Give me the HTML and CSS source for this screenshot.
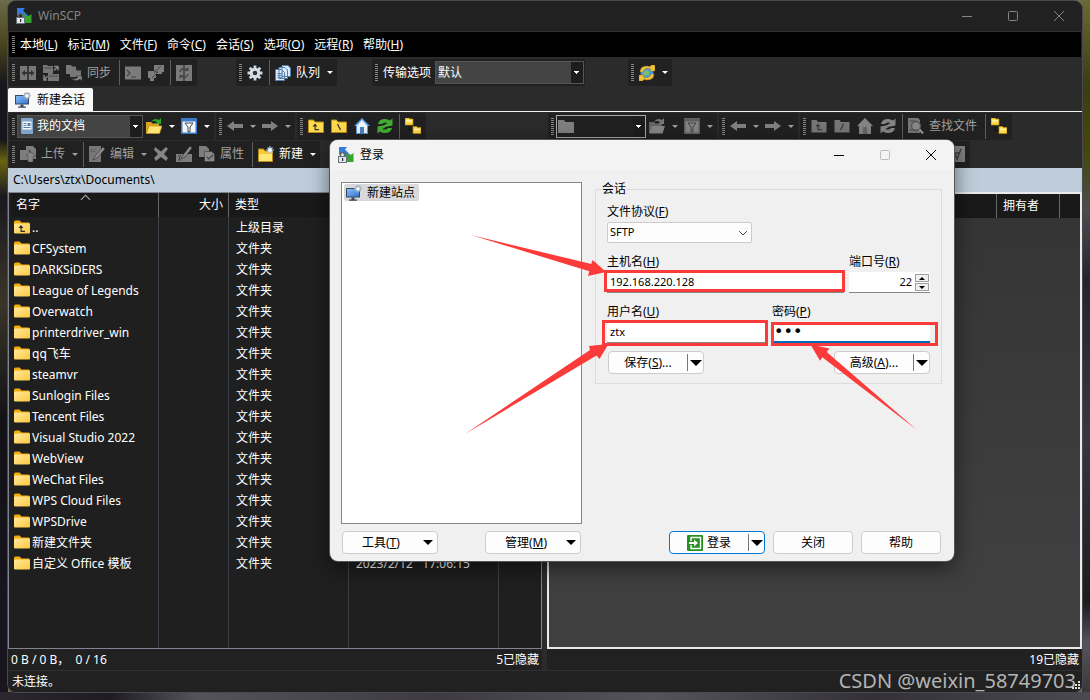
FILE: index.html
```html
<!DOCTYPE html>
<html lang="zh-CN">
<head>
<meta charset="utf-8">
<title>WinSCP</title>
<link rel="stylesheet" href="styles.css">
</head>
<body>
<svg class="defs" aria-hidden="true">
  <defs>
    <linearGradient id="gf" x1="0" y1="0" x2="1" y2="1"><stop offset="0" stop-color="#ffe9a0"/><stop offset="1" stop-color="#ffc83c"/></linearGradient>
    <linearGradient id="gb" x1="0" y1="0" x2="1" y2="1"><stop offset="0" stop-color="#8cc0f8"/><stop offset="1" stop-color="#2f73cf"/></linearGradient>
  </defs>
  <symbol id="i-app" viewBox="0 0 16 16"><path d="M1 0h8L7 2.500l5 5-3 2.500-5-5L1 8z" fill="#2f7de0"/><path d="M8 6l2 2 3.500-.5L15.500 6v9H7l2-3-2-3z" fill="#35a52c"/><path d="M2.500 10V7.500a2 2 0 0 1 4 0V10" fill="none" stroke="#5c6670" stroke-width="1.600"/><rect x=".5" y="9.500" width="8" height="6" fill="#dfe5ea" stroke="#66717c"/><path d="M4 11h1.200v3H4z" fill="#333"/></symbol>
  <symbol id="i-site" viewBox="0 0 16 16"><rect x=".5" y="3.500" width="13" height="8.500" fill="url(#gb)" stroke="#34485e"/><path d="M3 14.500h8v1.200H3zM5.500 12.500h3v2h-3z" fill="#34485e"/><path d="M12 0v7.400M8.300 3.700h7.400M9.400 1.100l5.200 5.200M14.600 1.100L9.400 6.300" stroke="#9fb1c3" stroke-width="1.400"/><circle cx="12" cy="3.700" r="2.300" fill="#fff" stroke="#9fb1c3" stroke-width="1.200"/></symbol>
  <symbol id="i-folder" viewBox="0 0 16 14"><path d="M0 2a1.500 1.500 0 0 1 1.500-1.500h4L7.500 2.500H14.500A1.500 1.500 0 0 1 16 4v5H0z" fill="#f4ae0c"/><rect y="3.500" width="16" height="10" rx="1.300" fill="url(#gf)"/></symbol>
  <symbol id="i-folderup" viewBox="0 0 16 14"><use href="#i-folder"/><path d="M7 5L4.500 8h2v4H11v-1.200H7.700V8h1.800z" fill="#2b2b2b"/></symbol>
  <symbol id="i-sync1" viewBox="0 0 16 16"><path d="M0 1h7.300v14H0zM8.700 1H16v14H8.700z" fill="#777"/><path d="M1.500 8L5 5v2h6V5l3.500 3L11 11V9H5v2z" fill="#333"/></symbol>
  <symbol id="i-sync2" viewBox="0 0 16 16"><path d="M0 0h4l1 1h5v7H0zM5 8h4l1 1h6v7H5z" fill="#777"/><path d="M11 1.500h4v4M15 1.500l-4 4M1 10v5h3M1 15l3.500-4" fill="none" stroke="#858585" stroke-width="1.500"/><path d="M1 3h8M6 11h9" stroke="#4a4a4a"/></symbol>
  <symbol id="i-sync3" viewBox="0 0 16 16"><path d="M0 0h5l1 1.500h4V9H0zM4 4h6l1 1.500h4V12H4z" fill="#777"/><path d="M4 12q4 4 8 0l-2-1h6v5l-2-2q-5 4-10-2" fill="#888" stroke="#333" stroke-width=".5"/></symbol>
  <symbol id="i-term" viewBox="0 0 16 16"><path d="M0 1.500h16v13H0z" fill="#7b7b7b"/><path d="M2 5l3 3-3 3M6 12h5" fill="none" stroke="#444" stroke-width="1.200"/></symbol>
  <symbol id="i-putty" viewBox="0 0 16 16"><path d="M6 0h10v7h-2v2H8V7H6zM0 6h8v7H6v3H2v-3H0z" fill="#7d7d7d"/><path d="M13 1L6 7h4l-6 6" fill="none" stroke="#444"/></symbol>
  <symbol id="i-resync" viewBox="0 0 16 16"><path d="M0 0h7.500v16H0zM8.500 0H16v16H8.500z" fill="#7a7a7a"/><path d="M4 7a4 4 0 0 1 7-2M12 9a4 4 0 0 1-7 2" fill="none" stroke="#444" stroke-width="1.400"/><path d="M12.500 2v4h-4zM3.500 14v-4h4z" fill="#444"/></symbol>
  <symbol id="i-gear" viewBox="0 0 16 16"><path d="M8 .5v15M.5 8h15M2.700 2.700l10.600 10.600M13.300 2.700L2.700 13.300" stroke="#cbd7e3" stroke-width="2.800"/><circle cx="8" cy="8" r="5.300" fill="#d6e0ea"/><circle cx="8" cy="8" r="2.300" fill="#333"/></symbol>
  <symbol id="i-queue" viewBox="0 0 16 16"><path d="M7 .5h6l2.500 2.500v8.500H7zM4 2.500h6L12.500 5v8.500H4zM.5 4.500h6L9.500 7.500v8H.5z" fill="#dce9f7" stroke="#527da9"/><path d="M2.500 8.500h5M2.500 10.500h5M2.500 12.500h5" stroke="#527da9"/></symbol>
  <symbol id="i-globe" viewBox="0 0 16 16"><circle cx="8" cy="8" r="6.500" fill="#4a97df"/><path d="M6 6q3-2 4 1t-2 3-2 2-2-4z" fill="#7cc36c"/><path d="M1 7Q1 1 8 1l3 .5L12.500 0H16v6h-5.500l1.500-2Q6 1.500 4 7zM15 9q0 6-7 6l-3-.5L3.500 16H0v-6h5.500L4 12Q10 14.500 12 9z" fill="#f0c23a" stroke="#9b7014" stroke-width=".4"/></symbol>
  <symbol id="i-docs" viewBox="0 0 12 16"><rect width="12" height="16" rx="1" fill="#7fa5c9"/><path d="M1.500 3.500h9v8h-9z" fill="#f4f8fb"/><path d="M2.500 5.500h3M2.500 7.500h3M2.500 9.500h7" fill="none" stroke="#557da5"/><path d="M6.500 5h3v3h-3z" fill="#557da5"/></symbol>
  <symbol id="i-open" viewBox="0 0 16 16"><path d="M0 4h5l1.500 1.500H13V15H0z" fill="#d9a520"/><path d="M3 8h13l-2.500 7.500H.5z" fill="#ffe474" stroke="#c9941c" stroke-width=".7"/><path d="M5 4q3-5 8-2l2-2v6H9l2-2q-3-2-6 0z" fill="#2da42d"/></symbol>
  <symbol id="i-open-g" viewBox="0 0 16 16"><path d="M0 4h5l1.500 1.500H13V15H0z" fill="#666"/><path d="M3 8h13l-2.500 7.500H.5z" fill="#858585"/><path d="M5 4q3-5 8-2l2-2v6H9l2-2q-3-2-6 0z" fill="#777"/></symbol>
  <symbol id="i-filter" viewBox="0 0 16 16"><path d="M0 0h16v16H0z" fill="#3979c8"/><path d="M1.500 3.500h13v11h-13z" fill="#f2f6fb"/><path d="M4 5h8L9 9v5H7V9z" fill="#fff" stroke="#444"/></symbol>
  <symbol id="i-filter-g" viewBox="0 0 16 16"><path d="M0 0h16v16H0z" fill="#606060"/><path d="M1.500 3.500h13v11h-13z" fill="#858585"/><path d="M4 5h8L9 9v5H7V9z" fill="#858585" stroke="#444"/></symbol>
  <symbol id="i-left" viewBox="0 0 16 16"><path d="M0 8l7-5v3h9v4H7v3z" fill="#808080"/></symbol>
  <symbol id="i-right" viewBox="0 0 16 16"><path d="M16 8L9 3v3H0v4h9v3z" fill="#808080"/></symbol>
  <symbol id="i-up" viewBox="0 0 16 16"><path d="M.5 2h5L7 4h8.500v10.500H.5z" fill="#ffdb4d" stroke="#b88a16"/><path d="M7 5.500L4.500 8.500h2v3.700H11V11H7.700V8.500h1.800z" fill="#333"/></symbol>
  <symbol id="i-root" viewBox="0 0 16 16"><path d="M.5 2h5L7 4h8.500v10.500H.5z" fill="#ffdb4d" stroke="#b88a16"/><path d="M6.500 6l3 6" stroke="#333" stroke-width="1.300"/></symbol>
  <symbol id="i-home" viewBox="0 0 16 16"><path d="M8 0L0 8h2v8h12V8h2z" fill="#5c9be1"/><path d="M8 2L3 7.500V15h10V7.500z" fill="#eff6ff"/><path d="M6 9h4v7H6z" fill="#4b85c6"/></symbol>
  <symbol id="i-refresh" viewBox="0 0 16 16"><path d="M1 6Q2 1 8 1q3 0 5 1.500L15.500.5V7.500L8 9 6.500 7.500 10.500 5Q7 3.500 5 6zM15 10q-1 5-7 5-3 0-5-1.500L.5 15.500V8.500L8 7l1.500 1.500L5.500 11q3.500 1.500 5.500-1z" fill="#45ad35"/></symbol>
  <symbol id="i-up-g" viewBox="0 0 16 16"><path d="M.5 2h5L7 4h8.500v10.500H.5z" fill="#777"/><path d="M7 5.500L4.500 8.500h2v3.700H11V11H7.700V8.500h1.800z" fill="#383838"/></symbol>
  <symbol id="i-root-g" viewBox="0 0 16 16"><path d="M.5 2h5L7 4h8.500v10.500H.5z" fill="#777"/><path d="M9.500 6l-3 6" stroke="#383838" stroke-width="1.300"/></symbol>
  <symbol id="i-home-g" viewBox="0 0 16 16"><path d="M8 0L0 8h2v8h12V8h2z" fill="#858585"/><path d="M6 9h4v7H6z" fill="#666"/></symbol>
  <symbol id="i-refresh-g" viewBox="0 0 16 16"><path d="M1 6Q2 1 8 1q3 0 5 1.500L15.500.5V7.500L8 9 6.500 7.500 10.500 5Q7 3.500 5 6zM15 10q-1 5-7 5-3 0-5-1.500L.5 15.500V8.500L8 7l1.500 1.500L5.500 11q3.500 1.500 5.500-1z" fill="#858585"/></symbol>
  <symbol id="i-tree" viewBox="0 0 16 16"><path d="M0 0h4l1 1h3v6H0zM8 8.500h3.500l1 1H16v6H8z" fill="#ffd94a" stroke="#b98c12" stroke-width=".7"/><path d="M1 3h6M9 11.500h6" stroke="#fff3ae" stroke-width="1.500"/><path d="M4 8.500v4h3" fill="none" stroke="#000" stroke-dasharray="1 1"/></symbol>
  <symbol id="i-upload" viewBox="0 0 16 16"><path d="M6 0h7l3 3v10h-4V7L9 4H6zM0 4h8l3 3v4L8 9v5H0z" fill="#7d7d7d"/><path d="M6 9l5-3 5 4h-3v6H8v-6z" fill="#888" stroke="#333" stroke-width=".4"/></symbol>
  <symbol id="i-edit" viewBox="0 0 16 16"><path d="M0 0h12v16H0z" fill="#777"/><path d="M14 1l2 2-8 9-4 2 2-4z" fill="#8d8d8d" stroke="#333" stroke-width=".6"/><path d="M1.500 3.500h5M1.500 5.500h5" stroke="#606060"/></symbol>
  <symbol id="i-x" viewBox="0 0 16 16"><path d="M2 1l6 4.500L13 1l2 2-4 5 4 4-2 3-5-4-5 4-2-3 4-4-4-4z" fill="#858585"/></symbol>
  <symbol id="i-rename" viewBox="0 0 16 16"><path d="M0 8h16v8H0z" fill="#7d7d7d"/><path d="M14 0l2 2-7 9-4 2 2-4z" fill="#8d8d8d" stroke="#333" stroke-width=".7"/><path d="M2 10h3M3.500 10v4M2 14h3" stroke="#444"/></symbol>
  <symbol id="i-props" viewBox="0 0 16 16"><path d="M0 0h7l3 3v8H0z" fill="#7d7d7d"/><path d="M5.500 5.500h7L15.500 8v7.500h-10z" fill="#888" stroke="#333" stroke-width=".5"/><path d="M8 11l2 2 4-4" fill="none" stroke="#444" stroke-width="1.200"/></symbol>
  <symbol id="i-newf" viewBox="0 0 16 16"><path d="M.5 3h5L7 5h7.500v10.500H.5z" fill="#f8c838" stroke="#b88a16"/><path d="M1 8h13v7H1z" fill="#ffe776"/><path d="M12 0v8M8 4h8M9.500 1.500l5 5M14.500 1.500l-5 5" stroke="#a9cdf0" stroke-width="1.200"/><circle cx="12" cy="4" r="1.800" fill="#fff"/></symbol>
  <symbol id="i-find" viewBox="0 0 16 16"><path d="M0 0h10l2 2v13H0z" fill="#777"/><circle cx="8" cy="8" r="4.500" fill="#888" stroke="#555" stroke-width="1.300"/><path d="M11.500 11.500L15 15.500" stroke="#999" stroke-width="2"/><path d="M2 3h6M2 12h5" stroke="#4d4d4d"/></symbol>
  <symbol id="i-all" viewBox="0 0 16 16"><path d="M0 0h16v16H0z" fill="#808080"/><path d="M4 3l4 10 4-10M5.500 7h5" fill="none" stroke="#3c3c3c" stroke-width="1.400"/></symbol>
  <symbol id="i-login" viewBox="0 0 16 16"><rect width="16" height="16" rx="1" fill="#259221"/><path d="M4 6V2.500h9.500v11H4V10" fill="none" stroke="#fff" stroke-width="1.400"/><path d="M2 7h5V4.500L11 8l-4 3.500V9H2z" fill="#fff"/></symbol>
  <symbol id="i-gfolder" viewBox="0 0 16 14"><path d="M0 1h6l1.500 2H16v11H0z" fill="#808080"/></symbol>
  <symbol id="i-min" viewBox="0 0 12 12"><path d="M1 6.500h10" stroke="currentColor" fill="none"/></symbol>
  <symbol id="i-max" viewBox="0 0 12 12"><rect x="1.500" y="1.500" width="9" height="9" rx="1" stroke="currentColor" fill="none"/></symbol>
  <symbol id="i-close" viewBox="0 0 12 12"><path d="M1 1l10 10M11 1L1 11" stroke="currentColor" fill="none"/></symbol>
</svg>

<div class="window">
  <header class="titlebar">
    <svg class="icon"><use href="#i-app"/></svg>
    <span class="app-name">WinSCP</span>
    <button class="win-btn" aria-label="最小化"><svg><use href="#i-min"/></svg></button>
    <button class="win-btn" aria-label="最大化"><svg><use href="#i-max"/></svg></button>
    <button class="win-btn" aria-label="关闭窗口"><svg><use href="#i-close"/></svg></button>
  </header>

  <nav class="menubar">
    <i class="grip"></i>
    <button>本地(<u>L</u>)</button><button>标记(<u>M</u>)</button><button>文件(<u>F</u>)</button><button>命令(<u>C</u>)</button><button>会话(<u>S</u>)</button><button>选项(<u>O</u>)</button><button>远程(<u>R</u>)</button><button>帮助(<u>H</u>)</button>
  </nav>

  <div class="main-tools">
    <div class="band">
      <i class="grip"></i>
      <button class="tool"><svg class="icon"><use href="#i-sync1"/></svg></button>
      <button class="tool"><svg class="icon"><use href="#i-sync2"/></svg></button>
      <button class="tool off"><svg class="icon"><use href="#i-sync3"/></svg><span class="wide">同步</span></button>
      <i class="sep"></i>
      <button class="tool"><svg class="icon"><use href="#i-term"/></svg></button>
      <button class="tool"><svg class="icon"><use href="#i-putty"/></svg></button>
      <i class="sep"></i>
      <button class="tool"><svg class="icon"><use href="#i-resync"/></svg></button>
    </div>
    <div class="band queue-band">
      <i class="grip"></i>
      <button class="tool"><svg class="icon"><use href="#i-gear"/></svg></button>
      <i class="sep"></i>
      <button class="tool"><svg class="icon"><use href="#i-queue"/></svg><span>队列</span></button>
      <button class="drop" aria-label="队列选项"></button>
    </div>
    <div class="band">
      <i class="grip"></i>
      <label class="band-label" for="transfer">传输选项</label>
      <span class="combo transfer"><select id="transfer"><option>默认</option></select></span>
    </div>
    <div class="band update-band">
      <i class="grip"></i>
      <button class="tool"><svg class="icon"><use href="#i-globe"/></svg></button>
      <button class="drop" aria-label="更新选项"></button>
    </div>
  </div>

  <div class="tabs"><button class="tab"><svg class="icon"><use href="#i-site"/></svg>新建会话</button></div>

  <main class="panes">
    <section class="pane">
      <div class="tool-row">
        <div class="band">
          <i class="grip"></i>
          <span class="combo drive"><svg><use href="#i-docs"/></svg><select aria-label="本地位置"><option>我的文档</option></select></span>
          <button class="tool"><svg class="icon"><use href="#i-open"/></svg></button><button class="drop"></button>
          <button class="tool"><svg class="icon"><use href="#i-filter"/></svg></button><button class="drop"></button>
        </div>
        <div class="band">
          <i class="grip"></i>
          <button class="tool"><svg class="icon"><use href="#i-left"/></svg></button><button class="drop off"></button>
          <button class="tool"><svg class="icon"><use href="#i-right"/></svg></button><button class="drop off"></button>
        </div>
        <div class="band">
          <i class="grip"></i>
          <button class="tool"><svg class="icon"><use href="#i-up"/></svg></button>
          <button class="tool"><svg class="icon"><use href="#i-root"/></svg></button>
          <button class="tool"><svg class="icon"><use href="#i-home"/></svg></button>
          <button class="tool"><svg class="icon"><use href="#i-refresh"/></svg></button>
          <i class="sep"></i>
          <button class="tool"><svg class="icon"><use href="#i-tree"/></svg></button>
        </div>
      </div>
      <div class="tool-row">
        <div class="band">
          <i class="grip"></i>
          <button class="tool off"><svg class="icon"><use href="#i-upload"/></svg><span>上传</span></button><button class="drop off"></button>
          <i class="sep"></i>
          <button class="tool off"><svg class="icon"><use href="#i-edit"/></svg><span>编辑</span></button><button class="drop off"></button>
          <button class="tool"><svg class="icon"><use href="#i-x"/></svg></button>
          <button class="tool"><svg class="icon"><use href="#i-rename"/></svg></button>
          <button class="tool off"><svg class="icon"><use href="#i-props"/></svg><span class="wide">属性</span></button>
          <i class="sep"></i>
          <button class="tool"><svg class="icon"><use href="#i-newf"/></svg><span>新建</span></button><button class="drop"></button>
        </div>
      </div>
      <div class="path">C:\Users\ztx\Documents\</div>
      <div class="list">
        <table>
          <colgroup><col class="c-name"><col class="c-size"><col class="c-type"><col class="c-date"><col></colgroup>
          <thead><tr><th class="sorted">名字</th><th class="num">大小</th><th>类型</th><th></th><th></th></tr></thead>
          <tbody>
            <tr><td><svg><use href="#i-folderup"/></svg>..</td><td></td><td>上级目录</td><td></td><td></td></tr>
            <tr><td><svg><use href="#i-folder"/></svg>CFSystem</td><td></td><td>文件夹</td><td></td><td></td></tr>
            <tr><td><svg><use href="#i-folder"/></svg>DARKSiDERS</td><td></td><td>文件夹</td><td></td><td></td></tr>
            <tr><td><svg><use href="#i-folder"/></svg>League of Legends</td><td></td><td>文件夹</td><td></td><td></td></tr>
            <tr><td><svg><use href="#i-folder"/></svg>Overwatch</td><td></td><td>文件夹</td><td></td><td></td></tr>
            <tr><td><svg><use href="#i-folder"/></svg>printerdriver_win</td><td></td><td>文件夹</td><td></td><td></td></tr>
            <tr><td><svg><use href="#i-folder"/></svg>qq飞车</td><td></td><td>文件夹</td><td></td><td></td></tr>
            <tr><td><svg><use href="#i-folder"/></svg>steamvr</td><td></td><td>文件夹</td><td></td><td></td></tr>
            <tr><td><svg><use href="#i-folder"/></svg>Sunlogin Files</td><td></td><td>文件夹</td><td></td><td></td></tr>
            <tr><td><svg><use href="#i-folder"/></svg>Tencent Files</td><td></td><td>文件夹</td><td></td><td></td></tr>
            <tr><td><svg><use href="#i-folder"/></svg>Visual Studio 2022</td><td></td><td>文件夹</td><td></td><td></td></tr>
            <tr><td><svg><use href="#i-folder"/></svg>WebView</td><td></td><td>文件夹</td><td></td><td></td></tr>
            <tr><td><svg><use href="#i-folder"/></svg>WeChat Files</td><td></td><td>文件夹</td><td></td><td></td></tr>
            <tr><td><svg><use href="#i-folder"/></svg>WPS Cloud Files</td><td></td><td>文件夹</td><td></td><td></td></tr>
            <tr><td><svg><use href="#i-folder"/></svg>WPSDrive</td><td></td><td>文件夹</td><td></td><td></td></tr>
            <tr><td><svg><use href="#i-folder"/></svg>新建文件夹</td><td></td><td>文件夹</td><td></td><td></td></tr>
            <tr><td><svg><use href="#i-folder"/></svg>自定义 Office 模板</td><td></td><td>文件夹</td><td>2023/2/12&nbsp;&nbsp; 17:06:15</td><td></td></tr>
            <tr class="fill"><td></td><td></td><td></td><td></td><td></td></tr>
          </tbody>
        </table>
      </div>
      <div class="status"><span>0 B / 0 B，&nbsp; 0 / 16</span><span>5已隐藏</span></div>
    </section>

    <section class="pane">
      <div class="tool-row">
        <div class="band">
          <i class="grip"></i>
          <span class="combo remote"><svg><use href="#i-gfolder"/></svg><select aria-label="远程位置"><option></option></select></span>
          <button class="tool"><svg class="icon"><use href="#i-open-g"/></svg></button><button class="drop off"></button>
          <button class="tool"><svg class="icon"><use href="#i-filter-g"/></svg></button><button class="drop off"></button>
        </div>
        <div class="band">
          <i class="grip"></i>
          <button class="tool"><svg class="icon"><use href="#i-left"/></svg></button><button class="drop off"></button>
          <button class="tool"><svg class="icon"><use href="#i-right"/></svg></button><button class="drop off"></button>
        </div>
        <div class="band">
          <i class="grip"></i>
          <button class="tool"><svg class="icon"><use href="#i-up-g"/></svg></button>
          <button class="tool"><svg class="icon"><use href="#i-root-g"/></svg></button>
          <button class="tool"><svg class="icon"><use href="#i-home-g"/></svg></button>
          <button class="tool"><svg class="icon"><use href="#i-refresh-g"/></svg></button>
          <i class="sep"></i>
          <button class="tool off"><svg class="icon"><use href="#i-find"/></svg><span class="wide">查找文件</span></button>
          <i class="sep"></i>
          <button class="tool"><svg class="icon"><use href="#i-tree"/></svg></button>
        </div>
      </div>
      <div class="tool-row select-row">
        <div class="band">
          <i class="grip"></i>
          <button class="tool"><svg class="icon"><use href="#i-all"/></svg></button>
        </div>
      </div>
      <div class="path"></div>
      <div class="list remote-list">
        <table>
          <colgroup><col><col class="c-owner"><col class="c-end"></colgroup>
          <thead><tr><th></th><th>拥有者</th><th></th></tr></thead>
        </table>
      </div>
      <div class="status"><span></span><span>19已隐藏</span></div>
    </section>
  </main>
  <footer class="footer">未连接。</footer>
  <div class="watermark">CSDN @weixin_58749703</div>
  <svg class="size-grip" viewBox="0 0 9 9"><path d="M6 0h2v2H6zM3 3h2v2H3zM6 3h2v2H6zM0 6h2v2H0zM3 6h2v2H3zM6 6h2v2H6z" fill="#ddd"/></svg>
</div>

<form class="dialog" role="dialog" aria-labelledby="dlg-title">
  <div class="dlg-title">
    <svg class="icon"><use href="#i-app"/></svg>
    <span id="dlg-title">登录</span>
    <button type="button" class="win-btn" aria-label="最小化"><svg><use href="#i-min"/></svg></button>
    <button type="button" class="win-btn" disabled aria-label="最大化"><svg><use href="#i-max"/></svg></button>
    <button type="button" class="win-btn" aria-label="关闭对话框"><svg><use href="#i-close"/></svg></button>
  </div>
  <div class="dlg-body">
    <div class="sites"><button type="button" class="site"><svg class="icon"><use href="#i-site"/></svg>新建站点</button></div>
    <fieldset>
      <legend>会话</legend>
      <div class="field protocol">
        <label for="proto">文件协议(<u>F</u>)</label>
        <span class="select-box"><select id="proto"><option>SFTP</option></select><svg viewBox="0 0 10 6"><path d="M1 1l4 4 4-4" fill="none" stroke="#555"/></svg></span>
      </div>
      <div class="line host-line">
        <div class="field"><label for="host">主机名(<u>H</u>)</label><input id="host" type="text" value="192.168.220.128"></div>
        <div class="field"><label for="port">端口号(<u>R</u>)</label>
          <span class="spin"><input id="port" type="text" value="22"><span class="spin-btns"><button type="button" class="spin-up" aria-label="增加"></button><button type="button" class="spin-down" aria-label="减少"></button></span></span>
        </div>
      </div>
      <div class="line user-line">
        <div class="field"><label for="user">用户名(<u>U</u>)</label><input id="user" type="text" value="ztx"></div>
        <div class="field"><label for="pass">密码(<u>P</u>)</label><input id="pass" class="focused" type="password" value="ztx"></div>
      </div>
      <div class="actions">
        <span class="split"><button type="button">保存(<u>S</u>)...</button><button type="button" class="arrow" aria-label="保存选项"></button></span>
        <span class="split"><button type="button">高级(<u>A</u>)...</button><button type="button" class="arrow" aria-label="高级选项"></button></span>
      </div>
    </fieldset>
  </div>
  <div class="dlg-foot">
    <div class="foot-left">
      <button type="button" class="btn menu-btn"><span>工具(<u>T</u>)</span></button>
      <button type="button" class="btn menu-btn"><span>管理(<u>M</u>)</span></button>
    </div>
    <div class="foot-right">
      <span class="split primary"><button type="submit"><svg class="icon"><use href="#i-login"/></svg>登录</button><button type="button" class="arrow" aria-label="登录选项"></button></span>
      <button type="button" class="btn">关闭</button>
      <button type="button" class="btn">帮助</button>
    </div>
  </div>
  <svg class="marks" viewBox="330 140 624 421" aria-hidden="true">
    <g fill="none" stroke="#fb3b39" stroke-width="3">
      <path d="M605.500 271.500h238v19h-238zM603.500 321.500h163v23h-163zM772.500 323.500h164v21h-164z"/>
    </g>
    <g fill="#fb3b39">
      <path d="M471 235l120.300 29 1.400-4L606 272l-18 4 1.300-4.700z"/>
      <path d="M465 434l125-84-1-4 19.500-2-9 15-3-3.500z"/>
      <path d="M917 430l-94.700-72.700-2.300 3.400-9.500-16.200 19 4-2.800 3.500z"/>
    </g>
  </svg>
</form>
</body>
</html>
```
FILE: styles.css
```css
* { box-sizing: border-box; }

body {
  margin: 0;
  height: 100vh;
  padding: 1px 8px 8px;
  position: relative;
  overflow: hidden;
  font: 12px/16px "Noto Sans", "Noto Sans CJK SC", sans-serif;
  color: #fff;
  background:
    linear-gradient(90deg, #2a272e, #1e1b22 10%, #54525b 18%, #3d3a42 40%, #55535a 60%, #333039 80%, #4a4850) bottom / 100% 8px no-repeat,
    linear-gradient(#6b6a35, #3b3d12 12%, #45480c 22%, #4a4c50 30%, #24252a 40%, #37373d 62%, #1d1b20 86%, #55535c 92%, #333) right / 8px 100% no-repeat,
    linear-gradient(#6b6a4a, #4b461d 6%, #17161c 12%, #17161c 20%, #6b6410 23%, #191820 28%, #3a3528 43%, #121217 60%, #1a1520 100%) left / 8px 100% no-repeat,
    #6d6c4c;
}

button, input, select { font: inherit; color: inherit; margin: 0; padding: 0; border: 0; background: none; border-radius: 0; }
select { appearance: none; }
.defs { position: absolute; width: 0; height: 0; }
.icon { width: 16px; height: 16px; flex: none; }

.window {
  position: relative;
  height: 100%;
  display: flex;
  flex-direction: column;
  background: #2b2b2b;
  border-radius: 8px;
  overflow: hidden;
  box-shadow: 0 0 0 1px #4a4a4a;
}

.titlebar { height: 31px; flex: none; display: flex; align-items: center; background: #212121; padding-left: 8px; color: #858585; border-bottom: 1px solid #303030; }
.app-name { flex: 1; padding-left: 6px; }
.win-btn { width: 46px; height: 100%; display: flex; align-items: center; justify-content: center; }
.win-btn svg { width: 12px; height: 12px; }

.menubar { height: 25px; flex: none; display: flex; align-items: center; gap: 10px; background: #000; margin: 0 1px; }
.menubar .grip { margin-right: -7px; }
.menubar button { white-space: nowrap; }

.grip {
  width: 8px;
  height: 17px;
  flex: none;
  background: repeating-linear-gradient(#858585 0 1px, transparent 1px 2px) 3px 0 / 3px 100% no-repeat;
}
.main-tools { height: 31px; flex: none; display: flex; align-items: center; gap: 35px; padding: 1px; }
.queue-band { margin-left: 4px; }
.update-band { margin-left: 8px; }
.band { height: 27px; display: flex; align-items: center; background: #212121; border-radius: 2px; padding-right: 1px; flex: none; }
.tool { display: flex; align-items: center; padding: 0 4px 0 3px; height: 24px; }
.tool span { padding-left: 5px; white-space: nowrap; }
.tool .wide { padding-right: 2px; }
.off { color: #a0a0a0; }
.sep { width: 1px; height: 25px; background: #5e5e5e; margin: 0 2px; }
.drop { width: 12px; height: 24px; display: flex; align-items: center; justify-content: center; }
.drop::before { content: ""; border: 3px solid transparent; border-top-color: currentColor; border-bottom: 0; }
.band-label { padding: 0 4px 0 3px; }

.combo { position: relative; height: 23px; display: flex; align-items: center; background: #444; border: 1px solid #555; }
.combo select { width: 100%; height: 100%; padding-left: 2px; }
.combo::after {
  content: "";
  position: absolute;
  inset: 0 0 0 auto;
  width: 12px;
  pointer-events: none;
  background:
    linear-gradient(#fff, #fff) 3px 9px / 5px 1px no-repeat,
    linear-gradient(#fff, #fff) 4px 10px / 3px 1px no-repeat,
    linear-gradient(#fff, #fff) 5px 11px / 1px 1px no-repeat,
    #1d1d1d;
}
.transfer { width: 149px; }
.drive { width: 126px; }
.drive svg { width: 12px; height: 16px; flex: none; margin-left: 3px; }
.drive select { padding-left: 4px; }
.remote { width: 90px; background: #212121; border-color: #aaa; }
.remote svg { width: 16px; height: 14px; flex: none; margin-left: 1px; }

.tabs { height: 24px; flex: none; border-bottom: 1px solid #f3f3f3; display: flex; }
.tab { display: flex; align-items: center; gap: 6px; background: #f9f9f9; color: #000; padding: 0 8px 0 7px; border-radius: 2px 2px 0 0; }

.panes { flex: 1; min-height: 0; display: grid; grid-template-columns: 534fr 535fr; gap: 5px; }
.pane { display: flex; flex-direction: column; min-width: 0; }
.tool-row { height: 28px; flex: none; display: flex; align-items: center; gap: 2px; padding-left: 1px; }
.select-row { justify-content: flex-end; padding-right: 112px; }
.path { height: 24px; flex: none; background: #bfcddb; color: #000; padding: 4px 5px; }
.list { flex: 1; min-height: 0; border: 1px solid #808490; padding-left: 2px; background: #1f1f1f; overflow: hidden; }
.remote-list { background: linear-gradient(#343434, #3f3f3f 80%); border: 2px solid #e9e9ee; padding: 0; }

table { width: 100%; height: 100%; table-layout: fixed; border-collapse: separate; border-spacing: 0; }
.remote-list table { height: auto; }
.c-name { width: 148px; }
.c-size { width: 70px; }
.c-type { width: 120px; }
.c-date { width: 150px; }
.c-owner { width: 63px; }
.c-end { width: 20px; }
th { height: 24px; padding: 0 6px; background: #191919; text-align: left; font-weight: 400; border-right: 1px solid #666; position: relative; }
th:first-child { padding-left: 5px; }
th.num { text-align: right; padding-right: 5px; }
th:last-child { border-right: 0; }
.sorted::after { content: ""; position: absolute; left: 71px; top: 3px; width: 6px; height: 6px; border: solid #aaa; border-width: 1px 0 0 1px; transform: rotate(45deg); }
td { height: 21px; padding: 0 0 0 7px; border-right: 1px solid #3c4048; white-space: nowrap; }
td:first-child { padding-left: 3px; }
td:last-child { border-right: 0; }
td svg { width: 16px; height: 14px; vertical-align: -2px; margin-right: 2px; }
.fill td { height: auto; }

.status { height: 21px; flex: none; display: flex; justify-content: space-between; align-items: center; background: #212121; padding: 1px 3px 0; }
.footer { height: 22px; flex: none; background: #212121; border-top: 1px solid #303030; padding: 3px 4px; }
.watermark { position: absolute; right: 6px; bottom: 0; font-size: 20px; line-height: 22px; color: #b4b4b4; }
.size-grip { position: absolute; right: 1px; bottom: 2px; width: 9px; height: 9px; }

.dialog {
  position: absolute;
  left: 330px;
  top: 140px;
  width: 624px;
  color: #000;
  background: #f0f0f0;
  border-radius: 8px;
  box-shadow: 0 0 0 1px #555, 0 6px 22px rgba(0, 0, 0, .55);
}
.dlg-title { height: 30px; display: flex; align-items: center; padding-left: 8px; background: #f3f3f3; border-radius: 8px 8px 0 0; }
.dlg-title span { flex: 1; padding-left: 6px; }
.dlg-title .win-btn:disabled { color: #bbb; }
.dlg-body { display: grid; grid-template-columns: 241px 1fr; gap: 13px; padding: 12px 12px 0 11px; }
.sites { height: 342px; background: #fff; border: 1px solid #828790; padding: 1px 2px; }
.site { display: flex; align-items: center; gap: 5px; height: 17px; background: #d9d9d9; border-radius: 2px; padding: 0 4px 0 2px; }

fieldset { margin: 0; padding: 6px 11px 9px; border: 1px solid #dcdcdc; align-self: start; min-width: 0; }
legend { padding: 0; margin-left: -5px; line-height: 14px; }
.field { display: flex; flex-direction: column; min-width: 0; }
.field label { line-height: 20px; }
.field input, .select-box select { width: 100%; height: 21px; font-size: 11px; padding: 0 3px 2px; background: #fff; }
.protocol { width: 145px; }
.select-box { position: relative; height: 21px; border: 1px solid #ccc; border-radius: 2px; background: #fdfdfd; display: flex; }
.select-box select { height: 19px; padding: 0 2px 1px; background: none; }
.select-box svg { position: absolute; right: 3px; top: 7px; width: 10px; height: 6px; }
.line { display: grid; margin-top: 9px; }
.host-line { grid-template-columns: 1fr 81px; gap: 5px; }
.user-line { grid-template-columns: 159px 1fr; gap: 6px; }
.field input { border-bottom: 1px solid #868686; outline: 0; }
.user-line input.focused { border-bottom: 2px solid #0067c0; padding: 0 2px; font: 16px "DejaVu Sans", sans-serif; }
.spin { display: flex; height: 21px; background: #fff; border-bottom: 1px solid #868686; }
.field .spin input { border: 0; height: 20px; text-align: right; min-width: 0; flex: 1; }
.spin-btns { width: 15px; display: flex; flex-direction: column; padding: 2px 1px 1px 0; gap: 1px; }
.spin-btns button { flex: 1; background: #f0f0f0; border: 1px solid #a0a0a0; display: flex; align-items: center; justify-content: center; }
.spin-btns button::before { content: ""; border: 0 solid transparent; }
.spin-btns .spin-up::before { border-width: 0 3px 3px; border-bottom-color: #000; }
.spin-btns .spin-down::before { border-width: 3px 3px 0; border-top-color: #000; }
.actions { display: flex; justify-content: space-between; margin-top: 8px; padding-left: 1px; }

.btn, .split { height: 23px; background: #fdfdfd; border: 1px solid #ccc; border-radius: 4px; }
.split { width: 96px; display: flex; align-items: center; }
.split button { flex: 1; height: 100%; display: flex; align-items: center; justify-content: center; white-space: pre; }
.split .icon { margin-right: 4px; }
.split .arrow { flex: none; width: 16px; height: 17px; border-left: 1px solid #777; }
.arrow::before, .menu-btn::after { content: ""; border: 6px solid transparent; border-top-color: #000; border-bottom: 0; }
.menu-btn::after { border-width: 5px 5px 0; }
.primary { border-color: #0078d4; }
.dlg-foot { display: flex; justify-content: space-between; padding: 7px 13px 7px 12px; }
.foot-left { display: flex; justify-content: space-between; width: 239px; }
.foot-right { display: flex; gap: 8px; }
.btn { width: 80px; }
.menu-btn { width: 96px; display: flex; align-items: center; justify-content: space-between; padding: 0 4px 0 19px; }
.marks { position: absolute; inset: 0; width: 100%; height: 100%; pointer-events: none; }
```
